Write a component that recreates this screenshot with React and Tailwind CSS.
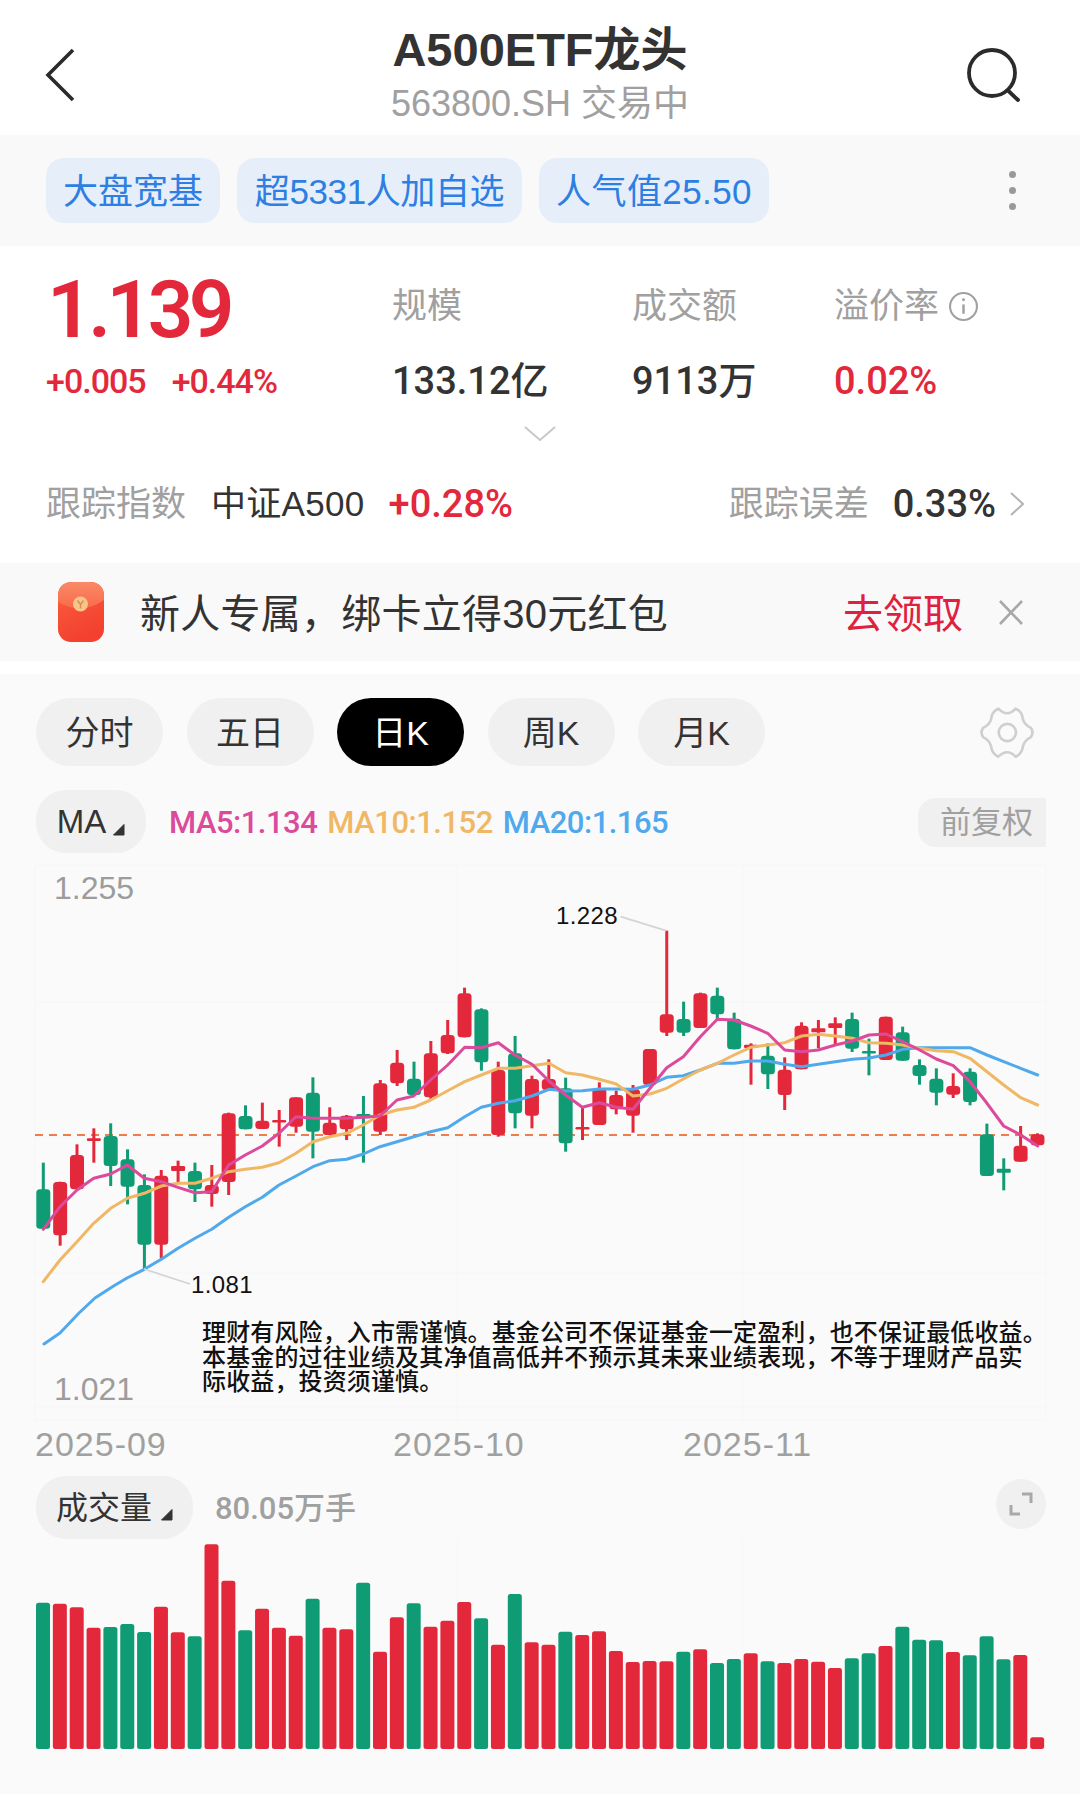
const sans = "font-['Liberation_Sans','Noto_Sans_CJK_SC',sans-serif]";
const num = "font-['Roboto','Noto_Sans_CJK_SC',sans-serif]";

const RED = "#e4283b";
const GREEN = "#0f9b74";

// i, color, wickTop, bodyTop, bodyBottom, wickBottom (read off the zoomed crops)
const seg1 = [
  ["g", 908, 988, 1106, 1106], ["r", 965, 966, 1126, 1157], ["r", 853, 885, 988, 988], ["r", 805, 835, 843, 908],
  ["g", 790, 828, 918, 978], ["g", 868, 898, 980, 1033], ["g", 943, 975, 1154, 1228], ["r", 930, 947, 1154, 1195],
  ["r", 902, 918, 933, 968], ["g", 908, 933, 988, 1026], ["r", 915, 975, 1002, 1040], ["r", 758, 760, 966, 1005],
  ["g", 736, 768, 808, 808], ["r", 728, 782, 807, 807], ["r", 750, 780, 787, 860], ["r", 712, 712, 800, 818],
  ["g", 652, 698, 815, 895], ["r", 742, 788, 825, 825], ["r", 765, 767, 808, 840], ["g", 708, 762, 775, 908],
].map(([c, a, b, d, e]) => [c, 860 + a / 3, 860 + b / 3, 860 + d / 3, 860 + e / 3]);

const seg2 = [
  ["r", 600, 610, 755, 765], ["r", 510, 548, 610, 618], ["g", 545, 596, 645, 645], ["r", 483, 520, 652, 658],
  ["r", 420, 465, 520, 522], ["r", 323, 340, 472, 472], ["g", 385, 388, 547, 572], ["r", 545, 570, 765, 770],
  ["g", 468, 520, 700, 745], ["r", 587, 597, 707, 745], ["r", 538, 597, 630, 630], ["g", 593, 625, 790, 815],
  ["r", 680, 741, 748, 780], ["r", 607, 625, 735, 735], ["r", 632, 645, 688, 703], ["r", 615, 628, 707, 758],
  ["r", 507, 507, 615, 615], ["r", 152, 403, 458, 468], ["g", 365, 417, 458, 468], ["r", 338, 340, 444, 444],
].map(([c, a, b, d, e]) => [c, 880 + a / 3, 880 + b / 3, 880 + d / 3, 880 + e / 3]);

const seg3 = [
  ["g", 83, 107, 163, 178], ["g", 158, 176, 268, 268], ["r", 250, 254, 264, 374], ["g", 250, 287, 343, 387],
  ["r", 292, 329, 405, 450], ["r", 187, 197, 328, 328], ["r", 180, 205, 217, 265], ["r", 172, 190, 204, 255],
  ["g", 158, 177, 266, 276], ["g", 236, 273, 280, 346], ["r", 170, 170, 300, 300], ["g", 200, 217, 302, 302],
  ["g", 298, 315, 348, 374], ["g", 325, 356, 398, 436], ["r", 340, 378, 404, 414], ["g", 325, 335, 426, 436],
  ["g", 491, 523, 648, 648], ["g", 595, 626, 638, 691], ["r", 498, 557, 605, 605], ["r", 520, 523, 556, 556],
].map(([c, a, b, d, e]) => [c, 960 + a / 3, 960 + b / 3, 960 + d / 3, 960 + e / 3]);

const candles = [...seg1, ...seg2, ...seg3];

const conv = (pts, ox, oy) => pts.map(([x, y]) => [ox + x / 3, oy + y / 3]);
const toPoints = (pts) => pts.map((p) => p.map((n) => n.toFixed(1)).join(",")).join(" ");

const ma5 = [
  ...conv([[70,1108],[120,1040],[171,990],[221,955],[272,942],[322,915],[373,955],[424,965],[474,982],[525,998],[575,995],[626,915],[676,885],[727,858],[777,820],[828,770],[879,775],[929,775],[980,775],[1030,772]], 20, 860),
  ...conv([[30,708],[81,660],[131,648],[182,600],[233,555],[284,502],[334,503],[385,488],[435,525],[486,553],[537,603],[587,645],[637,682],[688,668],[739,682],[789,688],[840,625],[890,563],[940,530],[991,470]], 370, 880),
  ...conv([[52,178],[102,180],[152,198],[203,220],[254,270],[305,275],[355,270],[406,255],[457,243],[507,225],[558,222],[608,245],[659,270],[709,297],[760,317],[810,365],[861,430],[911,498],[962,525],[1013,558]], 700, 960),
];

const ma10 = [
  ...conv([[70,1265],[120,1200],[171,1145],[221,1090],[272,1045],[322,1015],[373,1000],[424,978],[474,970],[525,970],[575,955],[626,935],[676,928],[727,922],[777,908],[828,880],[879,845],[929,830],[980,820],[1030,795]], 20, 860),
  ...conv([[30,705],[81,690],[131,682],[182,660],[233,632],[284,605],[334,585],[385,565],[435,565],[486,557],[537,550],[587,578],[637,585],[688,598],[739,612],[789,648],[840,642],[890,625],[940,597],[991,570]], 370, 880),
  ...conv([[52,310],[102,285],[152,262],[203,255],[254,248],[305,228],[355,223],[406,228],[457,235],[507,248],[558,250],[608,255],[659,265],[709,272],[760,275],[810,295],[861,335],[911,375],[962,413],[1013,435]], 700, 960),
];

const ma20 = [
  [44, 1344], [60, 1333], [79, 1313], [95, 1298], [113.6, 1286], [127, 1278],
  ...conv([[373,1228],[424,1198],[474,1165],[525,1135],[575,1108],[626,1072],[676,1040],[727,1012],[777,975],[828,948],[879,920],[929,902],[980,898],[1030,882]], 20, 860),
  ...conv([[30,800],[81,785],[131,770],[182,755],[233,743],[284,710],[334,682],[385,670],[435,662],[486,648],[537,628],[587,633],[637,632],[688,627],[739,627],[789,628],[840,615],[890,592],[940,587],[991,570]], 370, 880),
  ...conv([[52,310],[102,310],[152,303],[203,303],[254,313],[305,320],[355,313],[406,305],[457,298],[507,294],[558,285],[608,268],[659,263],[709,263],[760,263],[810,263],[861,285],[911,305],[962,325],[1013,345]], 700, 960),
];

const volumes = [
  ["g",938],["r",941],["r",952],["r",1013],["g",1011],["g",1002],["g",1026],["r",950],["r",1027],["g",1039],
  ["r",763],["r",872],["g",1021],["r",956],["r",1013],["r",1037],["g",926],["r",1013],["r",1018],["g",878],
  ["r",1085],["r",982],["g",940],["r",1010],["r",992],["r",936],["g",985],["r",1064],["g",912],["r",1057],
  ["r",1064],["g",1025],["r",1035],["r",1024],["r",1083],["r",1116],["r",1113],["r",1114],["g",1085],["r",1078],
  ["g",1119],["g",1107],["r",1090],["g",1114],["r",1119],["r",1107],["r",1115],["r",1134],["g",1105],["g",1090],
  ["r",1068],["g",1010],["g",1049],["g",1051],["r",1086],["g",1096],["g",1039],["g",1108],["r",1095],["r",1342],
];

const colorOf = (c) => (c === "r" ? RED : GREEN);

function Tag({ children, className }) {
  return (
    <div className={`flex h-[65px] items-center justify-center rounded-[18px] bg-[#e6eefa] pt-[3px] text-[35px] text-[#2d7fe3] ${className}`}>
      {children}
    </div>
  );
}

function Tab({ label, active }) {
  return (
    <div
      className={
        active
          ? "flex h-[68px] w-[127px] items-center justify-center rounded-[34px] bg-black pt-[2px] text-[34px] text-white"
          : "flex h-[68px] w-[127px] items-center justify-center rounded-[34px] bg-[#f0f0f0] pt-[2px] text-[34px] text-[#333]"
      }
    >
      {label}
    </div>
  );
}

function Caret() {
  return (
    <svg width="13" height="13" viewBox="0 0 13 13" className="mt-[14px]">
      <path d="M12 1.5 V12 H1.5 Z" fill="#333" stroke="#333" strokeWidth="1" strokeLinejoin="round" />
    </svg>
  );
}

function RedPacket() {
  return (
    <svg width="48" height="62" viewBox="0 0 48 62">
      <defs>
        <linearGradient id="pk" x1="0" y1="0" x2="0.4" y2="1">
          <stop offset="0" stopColor="#f9613f" />
          <stop offset="1" stopColor="#f3402f" />
        </linearGradient>
        <linearGradient id="flap" x1="0" y1="0" x2="0" y2="1">
          <stop offset="0" stopColor="#fa8a68" />
          <stop offset="1" stopColor="#f96a48" />
        </linearGradient>
      </defs>
      <rect x="1" y="1" width="46" height="60" rx="13" fill="url(#pk)" />
      <path d="M1 16 Q1 1 16 1 H32 Q47 1 47 16 V19 Q24 35 1 21 Z" fill="url(#flap)" />
      <circle cx="23.5" cy="23" r="7.5" fill="#f7c58c" />
      <path d="M20.5 19.5 L23.5 23.5 L26.5 19.5 M23.5 23.5 V27.5" fill="none" stroke="#e08a4e" strokeWidth="1.4" />
    </svg>
  );
}

function Gear() {
  return (
    <svg width="56" height="53" viewBox="60 42 168 160" fill="none" stroke="#cfcfcf" strokeWidth="8" strokeLinejoin="round">
      <path d="M118 50 Q145 78 170 50 Q190 58 192 82 Q196 98 216 108 Q226 122 216 136 Q196 146 192 164 Q190 186 170 195 Q145 168 118 195 Q98 186 96 164 Q92 146 72 136 Q62 122 72 108 Q92 98 96 82 Q98 58 118 50 Z" />
      <circle cx="145" cy="122" r="26" />
    </svg>
  );
}

function Chart() {
  return (
    <svg width="1080" height="570" viewBox="0 853 1080 570" className="block">
      {[865, 1002, 1137, 1273, 1407, 1420].map((y) => (
        <line key={y} x1="35" x2="1046" y1={y} y2={y} stroke="#f6f6f6" strokeWidth="1" />
      ))}
      {[35, 457, 743, 1046].map((x) => (
        <line key={x} x1={x} x2={x} y1="865" y2="1420" stroke="#f6f6f6" strokeWidth="1" />
      ))}
      <text x="54" y="899" fontSize="32" fill="#9c9c9c" fontFamily="Liberation Sans">1.255</text>
      <text x="54" y="1400" fontSize="32" fill="#9c9c9c" fontFamily="Liberation Sans">1.021</text>

      <line x1="35" x2="1040" y1="1135" y2="1135" stroke="#ee7d4c" strokeWidth="2" strokeDasharray="8 6" />

      {candles.map(([c, wt, bt, bb, wb], i) => {
        const x = 43.3 + i * 16.85;
        const h = Math.max(bb - bt, 2.5);
        return (
          <g key={i} fill={colorOf(c)}>
            <rect x={x - 1.5} y={wt} width="3" height={wb - wt} />
            <rect x={x - 7} y={bt} width="14" height={h} rx={h < 6 ? 1.2 : 3.5} />
          </g>
        );
      })}

      <polyline points={toPoints(ma20)} fill="none" stroke="#4fa9ec" strokeWidth="3" strokeLinejoin="round" strokeLinecap="round" />
      <polyline points={toPoints(ma10)} fill="none" stroke="#f0b765" strokeWidth="3" strokeLinejoin="round" strokeLinecap="round" />
      <polyline points={toPoints(ma5)} fill="none" stroke="#dc4a9c" strokeWidth="3" strokeLinejoin="round" strokeLinecap="round" />

      <polyline points="620.7,916.7 666,930.7" fill="none" stroke="#d4d4d4" strokeWidth="1.8" />
      <polyline points="144,1269 190,1284" fill="none" stroke="#d4d4d4" strokeWidth="1.8" />
      <text x="556" y="924" fontSize="24" fill="#111" letterSpacing="0.4" fontFamily="Liberation Sans">1.228</text>
      <text x="191" y="1293" fontSize="24" fill="#111" letterSpacing="0.4" fontFamily="Liberation Sans">1.081</text>
    </svg>
  );
}

function VolumeChart() {
  return (
    <svg width="1080" height="255" viewBox="0 1539 1080 255" className="block">
      {[457, 743].map((x) => (
        <line key={x} x1={x} x2={x} y1="1540" y2="1749" stroke="#f6f6f6" strokeWidth="1" />
      ))}
      {volumes.map(([c, z], i) => {
        const top = 1290 + z / 3;
        return <rect key={i} x={36 + i * 16.85} y={top} width="14" height={1749 - top} rx="2.5" fill={colorOf(c)} />;
      })}
    </svg>
  );
}

export default function App() {
  return (
    <div className={`flex h-[1794px] w-[1080px] flex-col overflow-hidden bg-white ${sans}`}>
      {/* header */}
      <div className="flex h-[135px] items-center pt-[14px] pl-[44px] pr-[44px]">
        <div className="w-[100px]">
          <svg width="32" height="54" viewBox="0 0 32 54" fill="none" stroke="#2b2b2b" strokeWidth="3.6">
            <path d="M29 2 L4 27 L29 52" />
          </svg>
        </div>
        <div className="flex-1 text-center">
          <div className="text-[47px] leading-[52px] font-bold text-[#333]">A500ETF龙头</div>
          <div className="mt-[6px] text-[36px] leading-[44px] text-[#a0a0a0]">563800.SH 交易中</div>
        </div>
        <div className="flex w-[100px] justify-end pr-[16px]">
          <svg width="54" height="56" viewBox="0 0 54 56" fill="none" stroke="#2b2b2b" strokeWidth="3.8">
            <circle cx="26" cy="26" r="23" />
            <path d="M42 43.5 L52 53" strokeLinecap="round" />
          </svg>
        </div>
      </div>

      {/* tags */}
      <div className="flex h-[111px] items-center bg-[#f9f9f9] pl-[46px] pr-[64px]">
        <div className="flex gap-[17px]">
          <Tag className="w-[174px]">大盘宽基</Tag>
          <Tag className="w-[285px] tracking-[-0.4px]">超5331人加自选</Tag>
          <Tag className="w-[230px] tracking-[0.4px]">人气值25.50</Tag>
        </div>
        <div className="ml-auto flex flex-col gap-[9px]">
          <div className="size-[7px] rounded-full bg-[#999]" />
          <div className="size-[7px] rounded-full bg-[#999]" />
          <div className="size-[7px] rounded-full bg-[#999]" />
        </div>
      </div>

      {/* quote */}
      <div className="h-[317px]">
        <div className="flex pl-[46px]">
          <div className="w-[346px] pt-[24px]">
            <div className={`pl-[1px] text-[80px] leading-[80px] font-semibold tracking-[-4.5px] text-[#e4283b] ${num}`}>1.139</div>
            <div className={`mt-[11px] flex gap-[26px] text-[34px] leading-[40px] font-medium tracking-[-1px] text-[#e4283b] ${num}`}>
              <span>+0.005</span>
              <span>+0.44%</span>
            </div>
          </div>
          <div className="w-[240px] pt-[40px]">
            <div className="text-[35px] leading-[40px] text-[#a0a0a0]">规模</div>
            <div className={`mt-[35px] text-[38px] leading-[40px] font-medium text-[#333] ${num}`}>133.12亿</div>
          </div>
          <div className="w-[202px] pt-[40px]">
            <div className="text-[35px] leading-[40px] text-[#a0a0a0]">成交额</div>
            <div className={`mt-[35px] text-[38px] leading-[40px] font-medium text-[#333] ${num}`}>9113万</div>
          </div>
          <div className="pt-[40px]">
            <div className="flex items-center gap-[9px] text-[35px] leading-[40px] text-[#a0a0a0]">
              溢价率
              <svg width="31" height="31" viewBox="0 0 30 30" fill="none" stroke="#a0a0a0" strokeWidth="2">
                <circle cx="15" cy="15" r="13" />
                <path d="M15 13 V22" strokeWidth="2.4" />
                <circle cx="15" cy="8.5" r="1.4" fill="#a0a0a0" stroke="none" />
              </svg>
            </div>
            <div className={`mt-[35px] text-[38px] leading-[40px] font-medium text-[#e4283b] ${num}`}>0.02%</div>
          </div>
        </div>
        <svg width="32" height="15" viewBox="0 0 32 15" fill="none" stroke="#c8c8c8" strokeWidth="2" className="mx-auto mt-[25px] block">
          <path d="M1 1 L16 14 L31 1" />
        </svg>
        <div className="mt-[38px] flex h-[50px] items-center pl-[46px] pr-[56px] text-[35px]">
          <span className="text-[#a0a0a0]">跟踪指数</span>
          <span className="ml-[25px] tracking-[0.3px] text-[#333]">中证A500</span>
          <span className={`ml-[24px] text-[38px] font-medium text-[#e4283b] ${num}`}>+0.28%</span>
          <span className="ml-auto text-[#a0a0a0]">跟踪误差</span>
          <span className={`ml-[24px] text-[38px] font-medium text-[#333] ${num}`}>0.33%</span>
          <svg width="14" height="24" viewBox="0 0 14 24" fill="none" stroke="#b4b4b4" strokeWidth="2" className="ml-[14px]">
            <path d="M1 1 L13 12 L1 23" />
          </svg>
        </div>
      </div>

      {/* promo banner */}
      <div className="flex h-[98px] items-center bg-[#f9f9f9] pl-[57px] pr-[56px]">
        <RedPacket />
        <span className="ml-[35px] pt-[4px] text-[40px] tracking-[0.25px] text-[#333]">新人专属，绑卡立得30元红包</span>
        <span className="ml-auto pt-[4px] text-[40px] text-[#e0203f]">去领取</span>
        <svg width="26" height="27" viewBox="0 0 26 27" fill="none" stroke="#a8a8a8" strokeWidth="2.6" className="ml-[35px]">
          <path d="M2 2 L24 25 M24 2 L2 25" />
        </svg>
      </div>

      {/* chart section */}
      <div className="mt-[13px] flex-1 bg-[#fafafa] pt-[24px]">
        <div className="flex items-center pl-[36px] pr-[45px]">
          <div className="flex gap-[23.5px]">
            <Tab label="分时" />
            <Tab label="五日" />
            <Tab label="日K" active />
            <Tab label="周K" />
            <Tab label="月K" />
          </div>
          <div className="ml-auto">
            <Gear />
          </div>
        </div>

        <div className="mt-[24px] flex items-center pl-[36px] pr-[34px]">
          <div className="flex h-[63px] w-[110px] items-center justify-center gap-[6px] rounded-[30px] bg-[#f0f0f0] pt-[1px] text-[33px] text-[#333]">
            MA
            <Caret />
          </div>
          <div className={`ml-[23px] flex gap-[10px] pt-[4px] text-[31px] font-medium tracking-[-0.5px] ${num}`}>
            <span className="text-[#dc4a9c]">MA5:1.134</span>
            <span className="text-[#f0b765]">MA10:1.152</span>
            <span className="text-[#4fa9ec]">MA20:1.165</span>
          </div>
          <div className="mt-[2px] ml-auto flex h-[49px] w-[128px] items-center justify-end rounded-l-[18px] bg-[#f0f0f0] pr-[13px] pt-[1px] text-[31px] text-[#a0a0a0]">
            前复权
          </div>
        </div>

        <div className="relative">
          <Chart />
          <div className="absolute top-[468px] left-[202px] w-[860px] text-[24px] leading-[24.5px] font-medium tracking-[0.14px] text-[#111]">
            理财有风险，入市需谨慎。基金公司不保证基金一定盈利，也不保证最低收益。
            <br />
            本基金的过往业绩及其净值高低并不预示其未来业绩表现，不等于理财产品实
            <br />
            际收益，投资须谨慎。
          </div>
        </div>

        <div className="flex h-[40px] pt-[1px] text-[34px] leading-[40px] tracking-[1px] text-[#a0a0a0]">
          <span className="ml-[35px] w-[358px]">2025-09</span>
          <span className="w-[290px]">2025-10</span>
          <span>2025-11</span>
        </div>

        <div className="mt-[13px] flex items-center pl-[36px] pr-[34px]">
          <div className="flex h-[63px] w-[157px] items-center justify-center gap-[8px] rounded-[30px] bg-[#f0f0f0] text-[32px] text-[#333]">
            成交量
            <Caret />
          </div>
          <span className={`ml-[22px] pt-[3px] text-[31px] font-medium text-[#a0a0a0] ${num}`}>80.05万手</span>
          <div className="ml-auto mb-[8px] flex size-[50px] items-center justify-center rounded-full bg-[#f0f0f0]">
            <svg width="26" height="26" viewBox="0 0 26 26" fill="none" stroke="#a8a8a8" strokeWidth="3">
              <path d="M14 3 H23 V12" />
              <path d="M3 14 V23 H12" />
            </svg>
          </div>
        </div>

        <VolumeChart />
      </div>
    </div>
  );
}
